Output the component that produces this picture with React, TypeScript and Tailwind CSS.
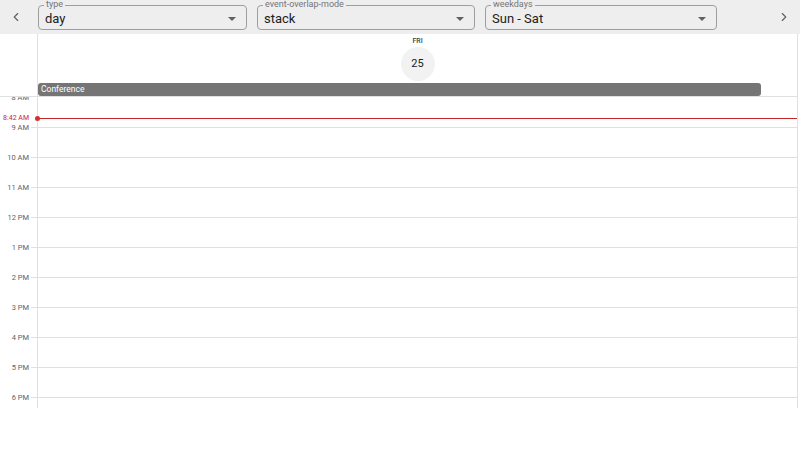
import React from 'react';
import { ChevronLeft, ChevronRight } from 'lucide-react';

const hours = ['8 AM', '9 AM', '10 AM', '11 AM', '12 PM', '1 PM', '2 PM', '3 PM', '4 PM', '5 PM', '6 PM'];

const Select: React.FC<{ label: string; value: string; width: string }> = ({ label, value, width }) => (
  <div className={`relative h-[25px] ${width} rounded-[4px] border border-[#9e9e9e] flex items-center pl-[6px] pr-[10px]`}>
    <span className="absolute left-[5px] top-[-7px] bg-[#eeeeee] px-[2px] text-[9px] leading-[11px] text-[#757575]">
      {label}
    </span>
    <span className="flex-1 text-[13px] leading-none text-[#212121] pt-[2px]">{value}</span>
    <span className="w-0 h-0 border-l-[4px] border-r-[4px] border-t-[4px] border-l-transparent border-r-transparent border-t-[#616161] mt-[2px]" />
  </div>
);

const App: React.FC = () => {
  return (
    <div className="w-[800px] h-[450px] bg-white font-['Roboto',sans-serif] overflow-hidden">
      <div className="h-[34px] bg-[#eeeeee] flex items-center">
        <button className="w-8 h-8 flex items-center justify-center text-[#616161]">
          <ChevronLeft size={14} strokeWidth={2} />
        </button>
        <div className="flex items-center ml-[6px] gap-[10px] mt-[1px]">
          <Select label="type" value="day" width="w-[209px]" />
          <Select label="event-overlap-mode" value="stack" width="w-[218px]" />
          <Select label="weekdays" value="Sun - Sat" width="w-[232px]" />
        </div>
        <div className="flex-1" />
        <button className="w-8 h-8 flex items-center justify-center text-[#616161]">
          <ChevronRight size={14} strokeWidth={2} />
        </button>
      </div>

      <div className="w-[798px] border-r border-[#e0e0e0]">
        <div className="flex h-[63px] border-b border-[#e0e0e0]">
          <div className="w-[38px] border-r border-[#e0e0e0]" />
          <div className="flex-1 flex flex-col">
            <div className="flex flex-col items-center">
              <span className="text-[7px] leading-[12px] mt-[1px] font-medium text-[#424242]">FRI</span>
              <span className="w-[34px] h-[34px] rounded-full bg-[#f2f2f2] flex items-center justify-center text-[11px] text-[#212121]">
                25
              </span>
            </div>
            <div className="mt-[2px] w-[95.3%] h-[13px] rounded-[3px] bg-[#757575] text-white text-[8.5px] leading-[13px] pl-[3px]">
              Conference
            </div>
          </div>
        </div>

        <div className="relative flex h-[311px] overflow-hidden">
          <div className="w-[38px] border-r border-[#e0e0e0] shrink-0">
            {hours.map((h, i) => (
              <div key={h} className="relative h-[30px]">
                <span
                  className={`absolute right-[8px] ${i === 0 ? 'top-[-5px]' : 'top-[-5px]'} whitespace-nowrap text-[7.5px] leading-[12px] text-[#616161]`}
                >
                  {h}
                </span>
                {i > 0 && <span className="absolute right-0 top-0 w-[6px] border-t border-[#e0e0e0]" />}
              </div>
            ))}
          </div>
          <div className="flex-1">
            {hours.map((h, i) => (
              <div key={h} className={`h-[30px] ${i > 0 ? 'border-t' : ''} border-[#e0e0e0]`} />
            ))}
          </div>

          <span className="absolute right-[768px] top-[15px] whitespace-nowrap text-right text-[7px] leading-[12px] text-[#c62828]">
            8:42 AM
          </span>
          <div className="absolute left-[37px] right-0 top-[21px] border-t border-[#c62828]" />
          <div className="absolute left-[35px] top-[19px] w-[5px] h-[5px] rounded-full bg-[#d32f2f]" />
        </div>
      </div>
    </div>
  );
};

export default App;
